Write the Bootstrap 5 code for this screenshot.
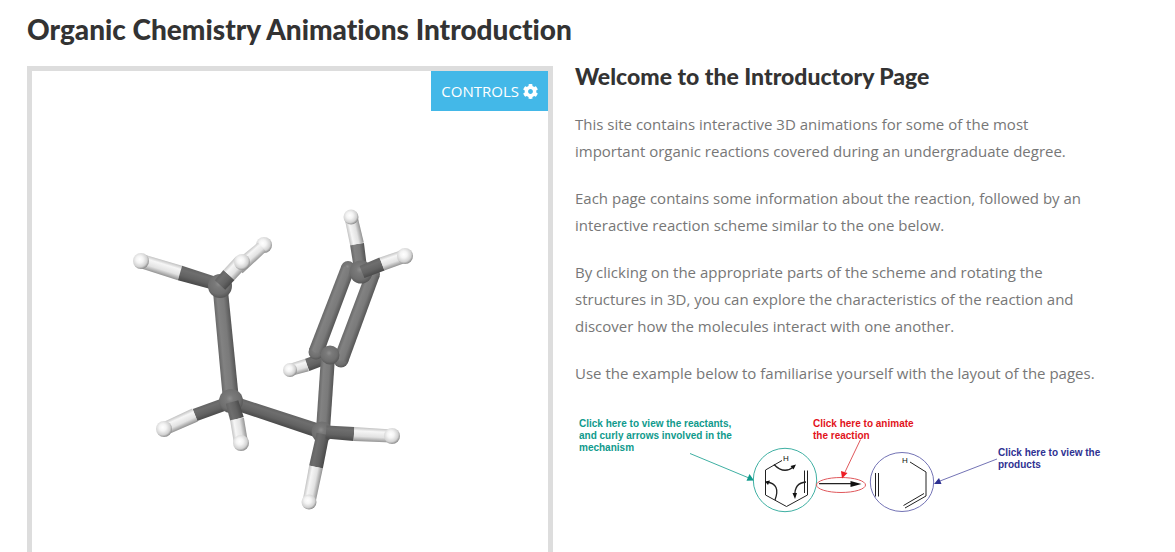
<!DOCTYPE html>
<html lang="en">
<head>
<meta charset="utf-8">
<meta name="viewport" content="width=device-width, initial-scale=1">
<title>Organic Chemistry Animations Introduction</title>
<link href="https://cdn.jsdelivr.net/npm/bootstrap@5.3.0/dist/css/bootstrap.min.css" rel="stylesheet">
<style>
  body { font-family: "Open Sans", sans-serif; font-size: 15px; line-height: 27px; color: #777; background: #fff; }
  .page { padding: 12px 74px 0 27px; }
  h1, h2 { font-family: Lato, "Open Sans", sans-serif; font-weight: 900; font-variant-ligatures: none; color: #333; }
  h1 { font-size: 28px; line-height: 34px; margin-bottom: 20px; }
  h2 { font-size: 23px; line-height: 28px; margin: -4px 0 21px; }
  .split { --bs-gutter-x: 22px; }
  .viewer { border: 5px solid #ddd; border-bottom: 0; }
  .controls { background: #43b8e8; color: #fff; border: 0; border-radius: 0; font-size: 15px; line-height: 24px; padding: 8px 10px; }
  .controls:hover { background: #2fa6d8; color: #fff; }
  .intro p { margin-bottom: 20px; }
  .scheme text { font-family: "Liberation Sans", Arial, sans-serif; font-size: 10px; font-weight: 700; }
  .scheme .atom { font-size: 8px; font-weight: 400; fill: #111; }
</style>
</head>
<body>
<main class="page container-fluid min-vh-100 d-flex flex-column">
  <h1>Organic Chemistry Animations Introduction</h1>
  <div class="row split flex-grow-1">
    <div class="col-6">
      <div class="viewer position-relative h-100">
        <svg id="molecule" class="d-block w-100" viewBox="32 71 516 480" role="img" aria-label="3D stick model of the molecule"></svg>
        <button type="button" class="btn controls position-absolute top-0 end-0 d-flex align-items-center gap-1">CONTROLS
          <svg width="15" height="15" viewBox="8 8 496 496" fill="currentColor" aria-hidden="true"><path d="M487.400 315.700l-42.600-24.600c4.300-23.200 4.300-47 0-70.200l42.600-24.600c4.900-2.800 7.100-8.600 5.500-14-11.100-35.600-30-67.800-54.700-94.600-3.800-4.100-10-5.100-14.800-2.300L380.800 110c-17.900-15.400-38.500-27.300-60.800-35.100V25.800c0-5.600-3.900-10.500-9.400-11.700-36.700-8.200-74.300-7.800-109.200 0-5.500 1.200-9.400 6.100-9.400 11.700V75c-22.200 7.900-42.800 19.800-60.800 35.100L88.700 85.500c-4.900-2.800-11-1.900-14.800 2.300-24.700 26.700-43.600 58.900-54.700 94.600-1.700 5.400.6 11.200 5.500 14L67.300 221c-4.300 23.200-4.300 47 0 70.200l-42.600 24.600c-4.900 2.800-7.100 8.600-5.500 14 11.100 35.600 30 67.800 54.700 94.600 3.800 4.100 10 5.100 14.800 2.300l42.600-24.600c17.900 15.400 38.500 27.300 60.800 35.100v49.200c0 5.600 3.900 10.500 9.400 11.700 36.700 8.200 74.300 7.800 109.200 0 5.500-1.200 9.400-6.100 9.400-11.700v-49.200c22.200-7.900 42.800-19.800 60.800-35.100l42.600 24.600c4.900 2.800 11 1.900 14.800-2.300 24.700-26.700 43.600-58.900 54.700-94.600 1.500-5.500-.7-11.300-5.600-14.100zM256 336c-44.100 0-80-35.900-80-80s35.900-80 80-80 80 35.900 80 80-35.900 80-80 80z"/></svg>
        </button>
      </div>
    </div>
    <div class="col-6 intro">
      <h2>Welcome to the Introductory Page</h2>
      <p>This site contains interactive 3D animations for some of the most important organic reactions covered during an undergraduate degree.</p>
      <p>Each page contains some information about the reaction, followed by an interactive reaction scheme similar to the one below.</p>
      <p>By clicking on the appropriate parts of the scheme and rotating the structures in 3D, you can explore the characteristics of the reaction and discover how the molecules interact with one another.</p>
      <p>Use the example below to familiarise yourself with the layout of the pages.</p>
      <svg class="scheme d-block w-100" viewBox="575 407 526 110" fill="none">
        <g fill="#0f9a8c"><text x="579" y="427">Click here to view the reactants,</text><text x="579" y="439">and curly arrows involved in the</text><text x="579" y="451">mechanism</text></g>
        <g fill="#e2131b"><text x="813" y="427">Click here to animate</text><text x="813" y="439">the reaction</text></g>
        <g fill="#2e3192"><text x="998" y="456">Click here to view the</text><text x="998" y="468">products</text></g>
        <g stroke="#3fb0a3"><path d="M690 453.500L749 478"/><circle cx="785" cy="480" r="31.700"/></g>
        <path fill="#0f9a8c" d="M754 480.500l-7.500.2 3-6.700z"/>
        <g stroke="#e0585c"><path d="M860.500 439.500L845 472"/><ellipse cx="841" cy="485" rx="24.500" ry="7.500"/></g>
        <path fill="#ee1c24" d="M842 478.500l-1-7.500 6.500 2z"/>
        <g stroke="#7373b5"><path d="M997 459L940 481"/><ellipse cx="902" cy="482" rx="31.700" ry="29.500"/></g>
        <path fill="#2e3192" d="M934 484l5-6 2.500 6z"/>
        <g stroke="#222" stroke-width="1">
          <path d="M782 460.500L765.500 470V495L786.500 506.500L807.500 495V470.500M804.500 470.500V493"/>
          <path d="M774 464.500Q784 475 794 466.500M775 500Q781 484 767 482M806 482Q794 483 795 496" stroke-width="1.300"/>
          <path d="M819 483.700H853" stroke-width="1.300"/>
          <path d="M875.500 473V496.500M878.500 473V496.500M910 462L926 472V496L905 508M924 493.500L903.500 505.500"/>
        </g>
        <g fill="#111"><path d="M861.500 484l-11-3v6zM796 464.500l-5.500 1.500 3 3.500zM765 481.500l5-1-2 4.500zM795 499l-2.500-6h4.500z"/></g>
        <text class="atom" x="783" y="461">H</text><text class="atom" x="902" y="463">H</text>
      </svg>
    </div>
  </div>
</main>
<script src="https://cdn.jsdelivr.net/npm/bootstrap@5.3.0/dist/js/bootstrap.bundle.min.js"></script>
<script>
  const svg = document.getElementById('molecule');
  const shades = {
    C: ['#686868', '#828282', '#7a7a7a', '#565656'],
    D: ['#646464', '#6e6e6e', '#626262', '#4a4a4a'],
    H: ['#c4c4c4', '#f6f6f6', '#e2e2e2', '#949494']
  };
  let out = '', defs = '', n = 0;
  const stops = s => `<stop offset="0" stop-color="${s[0]}"/><stop offset=".25" stop-color="${s[1]}"/><stop offset=".65" stop-color="${s[2]}"/><stop offset="1" stop-color="${s[3]}"/>`;

  // A bond is a tapered bar shaded across its width, lit from the top left.
  function bond(kind, x1, y1, x2, y2, w1, w2, cap) {
    const len = Math.hypot(x2 - x1, y2 - y1);
    let nx = -(y2 - y1) / len, ny = (x2 - x1) / len;
    if (nx + ny > 0) { nx = -nx; ny = -ny; }
    w1 += 2; w2 += 2;
    const mx = (x1 + x2) / 2, my = (y1 + y2) / 2, w = (w1 + w2) / 4, id = 'b' + n++;
    defs += `<linearGradient id="${id}" gradientUnits="userSpaceOnUse" x1="${mx + nx * w}" y1="${my + ny * w}" x2="${mx - nx * w}" y2="${my - ny * w}">${stops(shades[kind])}</linearGradient>`;
    const p = (x, y, r) => `${x + nx * r},${y + ny * r}`;
    if (cap) { ball('C', x1, y1, w1 / 2); ball('C', x2, y2, w2 / 2); }
    out += `<polygon fill="url(#${id})" points="${p(x1, y1, w1 / 2)} ${p(x2, y2, w2 / 2)} ${p(x2, y2, -w2 / 2)} ${p(x1, y1, -w1 / 2)}"/>`;
  }
  function ball(kind, x, y, r) { out += `<circle cx="${x}" cy="${y}" r="${r}" fill="url(#ball${kind})"/>`; }

  defs += `<radialGradient id="ballC" cx=".45" cy=".4" r=".62"><stop offset="0" stop-color="#8e8e8e"/><stop offset=".25" stop-color="#7a7a7a"/><stop offset=".7" stop-color="#6e6e6e"/><stop offset="1" stop-color="#545454"/></radialGradient>
    <radialGradient id="ballH" cx=".42" cy=".4" r=".62"><stop offset="0" stop-color="#fff"/><stop offset=".35" stop-color="#f4f4f4"/><stop offset=".75" stop-color="#d2d2d2"/><stop offset="1" stop-color="#888"/></radialGradient>`;

  // methyl carbon
  ball('H', 264, 245, 8);
  bond('H', 262, 247, 238, 268, 10, 12);
  bond('H', 141, 261, 180, 273, 12, 13);
  bond('D', 180, 273, 217, 284, 13, 11);
  ball('H', 141, 261, 8);
  bond('C', 220, 286, 231, 400, 13, 14);
  ball('C', 220, 286, 12);
  bond('D', 220, 285, 229, 275, 12, 13);
  bond('H', 229, 275, 241, 262, 13, 13);
  ball('H', 242, 262, 8);

  // double bond
  bond('D', 328, 357, 307, 365, 11, 11);
  bond('H', 307, 365, 290, 370, 11, 10);
  ball('H', 290, 370, 7);
  bond('C', 348, 268, 316, 352, 12, 13, true);
  bond('C', 373, 274, 341, 360, 12, 13, true);
  bond('C', 361, 272, 357, 244, 11, 12);
  bond('H', 357, 244, 351, 217, 12, 11);
  ball('H', 351, 217, 7.500);
  ball('C', 361, 272, 11.500);
  bond('D', 362, 272, 382, 264, 11, 12);
  bond('H', 382, 264, 405, 256, 12, 11);
  ball('H', 405, 256, 8);
  bond('C', 328, 357, 323, 430, 12, 12);
  ball('C', 330, 355, 9.500);

  // lower chain
  bond('D', 231, 402, 195, 415, 11, 11);
  bond('H', 195, 415, 164, 429, 12, 11);
  ball('H', 164, 429, 8);
  bond('D', 231, 402, 322, 432, 11, 12);
  ball('C', 231, 401, 12);
  bond('D', 232, 402, 237, 419, 11, 12);
  bond('H', 237, 419, 241, 443, 12, 12);
  ball('H', 241, 443, 8);
  ball('C', 322, 432, 10.500);
  bond('D', 323, 434, 316, 467, 11, 12);
  bond('H', 316, 467, 309, 502, 12, 11);
  ball('H', 309, 502, 7.500);
  bond('D', 326, 432, 354, 434, 11, 12);
  bond('H', 354, 434, 392, 436, 12, 11);
  ball('H', 392, 436, 8);

  svg.innerHTML = `<defs>${defs}</defs>${out}`;
</script>
</body>
</html>
